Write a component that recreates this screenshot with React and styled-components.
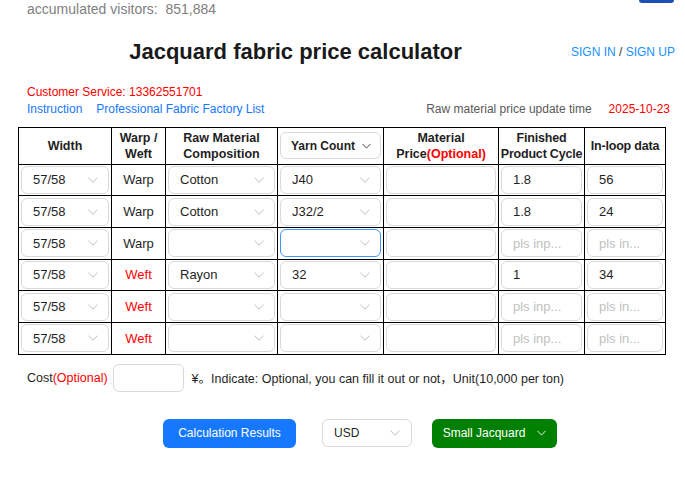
import React from "react";
import styled, { createGlobalStyle } from "styled-components";

const GlobalStyle = createGlobalStyle`
  body {
    margin: 0;
    background: #fff;
    font-family: "Liberation Sans", Arial, "Noto Sans CJK SC", sans-serif;
    color: rgba(0, 0, 0, 0.88);
  }
`;

const Page = styled.div`
  width: 685px;
  height: 484px;
  overflow: hidden;
`;

const TopBar = styled.div`
  display: flex;
  justify-content: space-between;
  align-items: flex-start;
  height: 20px;
  padding: 0 11px 0 27px;
`;

const Visitors = styled.div`
  font-size: 14px;
  line-height: 18px;
  color: #808080;
  white-space: pre;
`;

const TopTab = styled.div`
  width: 35px;
  height: 3px;
  background: #1d4fb4;
  border-radius: 0 0 6px 6px;
`;

const TitleRow = styled.div`
  display: grid;
  grid-template-columns: 571px 1fr;
  align-items: center;
  margin-top: 20px;
  height: 24px;
`;

const Title = styled.h1`
  margin: 0;
  padding-left: 20px;
  text-align: center;
  font-size: 22px;
  line-height: 24px;
  font-weight: 700;
  color: #1a1a1a;
`;

const SignIn = styled.div`
  font-size: 12px;
  color: #333;
  white-space: nowrap;
  span {
    color: #1890ff;
  }
`;

const Info = styled.div`
  margin-top: 20px;
  padding: 0 15px 0 27px;
  font-size: 12px;
  line-height: 17px;
`;

const Service = styled.div`
  color: #ff0000;
`;

const LinkRow = styled.div`
  display: flex;
  align-items: center;
  gap: 14px;
`;

const Link = styled.span`
  color: #1677ff;
`;

const UpdateTime = styled.div`
  margin-left: auto;
  color: #595959;
  span {
    margin-left: 17px;
    color: #ff0000;
  }
`;

const Table = styled.table`
  margin: 9px 0 0 18px;
  width: 647px;
  table-layout: fixed;
  border-collapse: collapse;
  border: 1px solid #000;
`;

const Th = styled.th`
  height: 35.5px;
  padding: 0;
  border: 1px solid #000;
  font-size: 12.5px;
  line-height: 16px;
  font-weight: 700;
  color: #1f1f1f;
  text-align: center;
  vertical-align: middle;
  white-space: nowrap;
  letter-spacing: ${(p) => (p.$tight ? "-0.2px" : "0")};
  em {
    font-style: normal;
    color: #ff0000;
  }
`;

const Td = styled.td`
  height: 30.7px;
  padding: 0 2px;
  border: 1px solid #000;
  vertical-align: middle;
  text-align: center;
  font-size: 13px;
  color: ${(p) => (p.$red ? "#ff0000" : "#1f1f1f")};
`;

const SelectBox = styled.div`
  box-sizing: border-box;
  display: flex;
  align-items: center;
  justify-content: ${(p) => (p.$center ? "center" : "space-between")};
  gap: ${(p) => (p.$center ? "7px" : "0")};
  height: ${(p) => p.$h || 28}px;
  padding: 0 10px 0 11px;
  border: 1px solid ${(p) => (p.$focus ? "#4096ff" : "#d9d9d9")};
  border-radius: 6px;
  background: #fff;
  font-size: ${(p) => (p.$bold ? "12px" : "13px")};
  font-weight: ${(p) => (p.$bold ? 700 : 400)};
  color: #1f1f1f;
  text-align: left;
  white-space: nowrap;
`;

const Field = styled.input`
  box-sizing: border-box;
  display: block;
  width: 100%;
  height: 28px;
  padding: 0 6px 0 11px;
  border: 1px solid #d9d9d9;
  border-radius: 6px;
  font-family: inherit;
  font-size: 13px;
  color: #1f1f1f;
  outline: none;
  &::placeholder {
    color: #bfbfbf;
  }
`;

const CostRow = styled.div`
  display: flex;
  align-items: center;
  margin-top: 9px;
  padding-left: 27px;
  font-size: 12.5px;
  color: #1f1f1f;
  white-space: pre;
  em {
    font-style: normal;
    color: #ff0000;
  }
`;

const CostInput = styled(Field)`
  width: 71px;
  margin: 0 8px 0 5px;
`;

const Actions = styled.div`
  display: flex;
  align-items: center;
  gap: 20px;
  margin-top: 27px;
  padding-left: 163px;
`;

const Button = styled.div`
  box-sizing: border-box;
  display: flex;
  align-items: center;
  justify-content: center;
  gap: 12px;
  width: ${(p) => p.$w}px;
  height: 29px;
  border-radius: 6px;
  background: ${(p) => p.$bg};
  color: #fff;
  font-size: 12px;
  margin-right: ${(p) => p.$mr || 0}px;
`;

const Currency = styled(SelectBox)`
  width: 90px;
  font-size: 12px;
  padding: 0 11px 0 11px;
`;

const Chevron = ({ color = "#bfbfbf", w = 10 }) => (
  <svg width={w} height="6" viewBox="0 0 10 6" style={{ flex: "none" }}>
    <polyline points="0.5,0.6 5,5.3 9.5,0.6" fill="none" stroke={color} strokeWidth="1" />
  </svg>
);

const Select = ({ value, focus }) => (
  <SelectBox $focus={focus}>
    <span>{value}</span>
    <Chevron />
  </SelectBox>
);

const rows = [
  { type: "Warp", material: "Cotton", yarn: "J40", cycle: "1.8", loop: "56" },
  { type: "Warp", material: "Cotton", yarn: "J32/2", cycle: "1.8", loop: "24" },
  { type: "Warp", material: "", yarn: "", cycle: "", loop: "", focus: true },
  { type: "Weft", material: "Rayon", yarn: "32", cycle: "1", loop: "34" },
  { type: "Weft", material: "", yarn: "", cycle: "", loop: "" },
  { type: "Weft", material: "", yarn: "", cycle: "", loop: "" },
];

const cols = [93, 54, 112, 106, 115, 86, 81];

export default function App() {
  return (
    <Page>
      <GlobalStyle />
      <TopBar>
        <Visitors>{"accumulated visitors:  851,884"}</Visitors>
        <TopTab />
      </TopBar>

      <TitleRow>
        <Title>Jacquard fabric price calculator</Title>
        <SignIn>
          <span>SIGN IN</span> / <span>SIGN UP</span>
        </SignIn>
      </TitleRow>

      <Info>
        <Service>Customer Service: 13362551701</Service>
        <LinkRow>
          <Link>Instruction</Link>
          <Link>Professional Fabric Factory List</Link>
          <UpdateTime>
            Raw material price update time<span>2025-10-23</span>
          </UpdateTime>
        </LinkRow>
      </Info>

      <Table>
        <colgroup>
          {cols.map((w, i) => (
            <col key={i} style={{ width: w }} />
          ))}
        </colgroup>
        <thead>
          <tr>
            <Th>Width</Th>
            <Th>
              Warp /<br />
              Weft
            </Th>
            <Th>
              Raw Material
              <br />
              Composition
            </Th>
            <Th style={{ padding: "0 2px" }}>
              <SelectBox $center $bold $h={27}>
                <span>Yarn Count</span>
                <Chevron color="#333" w={9} />
              </SelectBox>
            </Th>
            <Th>
              Material
              <br />
              Price<em>(Optional)</em>
            </Th>
            <Th $tight>
              Finished
              <br />
              Product Cycle
            </Th>
            <Th $tight>In-loop data</Th>
          </tr>
        </thead>
        <tbody>
          {rows.map((r, i) => (
            <tr key={i}>
              <Td>
                <Select value="57/58" />
              </Td>
              <Td $red={r.type === "Weft"}>{r.type}</Td>
              <Td>
                <Select value={r.material} />
              </Td>
              <Td>
                <Select value={r.yarn} focus={r.focus} />
              </Td>
              <Td>
                <Field readOnly defaultValue="" />
              </Td>
              <Td>
                <Field readOnly defaultValue={r.cycle} placeholder="pls inp..." />
              </Td>
              <Td>
                <Field readOnly defaultValue={r.loop} placeholder="pls in..." />
              </Td>
            </tr>
          ))}
        </tbody>
      </Table>

      <CostRow>
        Cost<em>(Optional)</em>
        <CostInput readOnly defaultValue="" />
        ¥。Indicate: Optional, you can fill it out or not，Unit(10,000 per ton)
      </CostRow>

      <Actions>
        <Button $bg="#1677ff" $w={133} $mr={6}>
          Calculation Results
        </Button>
        <Currency>
          <span>USD</span>
          <Chevron />
        </Currency>
        <Button $bg="#008000" $w={125}>
          Small Jacquard
          <Chevron color="#fff" w={9} />
        </Button>
      </Actions>
    </Page>
  );
}
